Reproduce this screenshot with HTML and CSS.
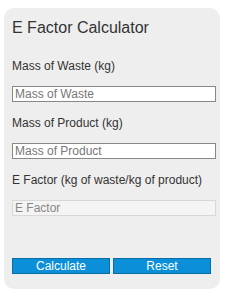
FILE: index.html
```html
<!DOCTYPE html>
<html lang="en">
<head>
    <meta charset="UTF-8">
    <meta name="viewport" content="width=device-width, initial-scale=1.0">
    <title>E Factor Calculator</title>
    <link rel="stylesheet" href="styles.css">
</head>
<body>
    <div class="calculator">
        <h2>E Factor Calculator</h2>
        <div class="field">
            <label for="waste">Mass of Waste (kg)</label>
            <input type="number" id="waste" placeholder="Mass of Waste">
        </div>
        <div class="field">
            <label for="product">Mass of Product (kg)</label>
            <input type="number" id="product" placeholder="Mass of Product">
        </div>
        <div class="field">
            <label for="result">E Factor (kg of waste/kg of product)</label>
            <input type="text" id="result" class="result" placeholder="E Factor" readonly>
        </div>
        <div class="buttons">
            <button class="button" onclick="calculate()">Calculate</button>
            <button class="button" onclick="reset()">Reset</button>
        </div>
    </div>
    <script>
        function calculate() {
            let waste = parseFloat(document.getElementById("waste").value);
            let product = parseFloat(document.getElementById("product").value);
            if (!isNaN(waste) && !isNaN(product) && product > 0) {
                document.getElementById("result").value = (waste / product).toFixed(2);
            }
        }
        function reset() {
            document.getElementById("waste").value = "";
            document.getElementById("product").value = "";
            document.getElementById("result").value = "";
        }
    </script>
</body>
</html>
```

FILE: styles.css
```css
body {
    font-family: Arial, "Liberation Sans", sans-serif;
    background-color: #fff;
    color: #333;
    margin: 0;
    padding: 8px 7px 11px 4px;
}
.calculator {
    width: 216px;
    box-sizing: border-box;
    background: #eee;
    border-radius: 10px;
    padding: 11px 4px 15px 8px;
}
.calculator h2 {
    font-size: 16px;
    font-weight: normal;
    line-height: 18px;
    margin: 0 0 22px 0;
}
.field {
    margin-bottom: 14px;
}
.field label {
    display: block;
    font-size: 12px;
    line-height: 14px;
    margin-bottom: 13px;
}
.field input {
    display: block;
    width: 100%;
    height: 16px;
    box-sizing: border-box;
    margin: 0;
    padding: 0 2px;
    border: 1px solid #888;
    background: #fff;
    font-family: Arial, "Liberation Sans", sans-serif;
    font-size: 12px;
    color: #333;
    outline: none;
}
.field input::placeholder {
    color: #777;
}
.field .result {
    background: #f4f4f4;
    border-color: #d8d8d8;
}
.field .result::placeholder {
    color: #888;
}
.buttons {
    display: flex;
    gap: 3px;
    margin-top: 42px;
}
.button {
    width: 98px;
    height: 16px;
    box-sizing: border-box;
    padding: 0;
    background: #0a8fd8;
    border: 1px solid #0a6ea6;
    color: white;
    font-family: Arial, "Liberation Sans", sans-serif;
    font-size: 12px;
    line-height: 14px;
    cursor: pointer;
}
.button:hover {
    background: #0b7fc0;
}
```
